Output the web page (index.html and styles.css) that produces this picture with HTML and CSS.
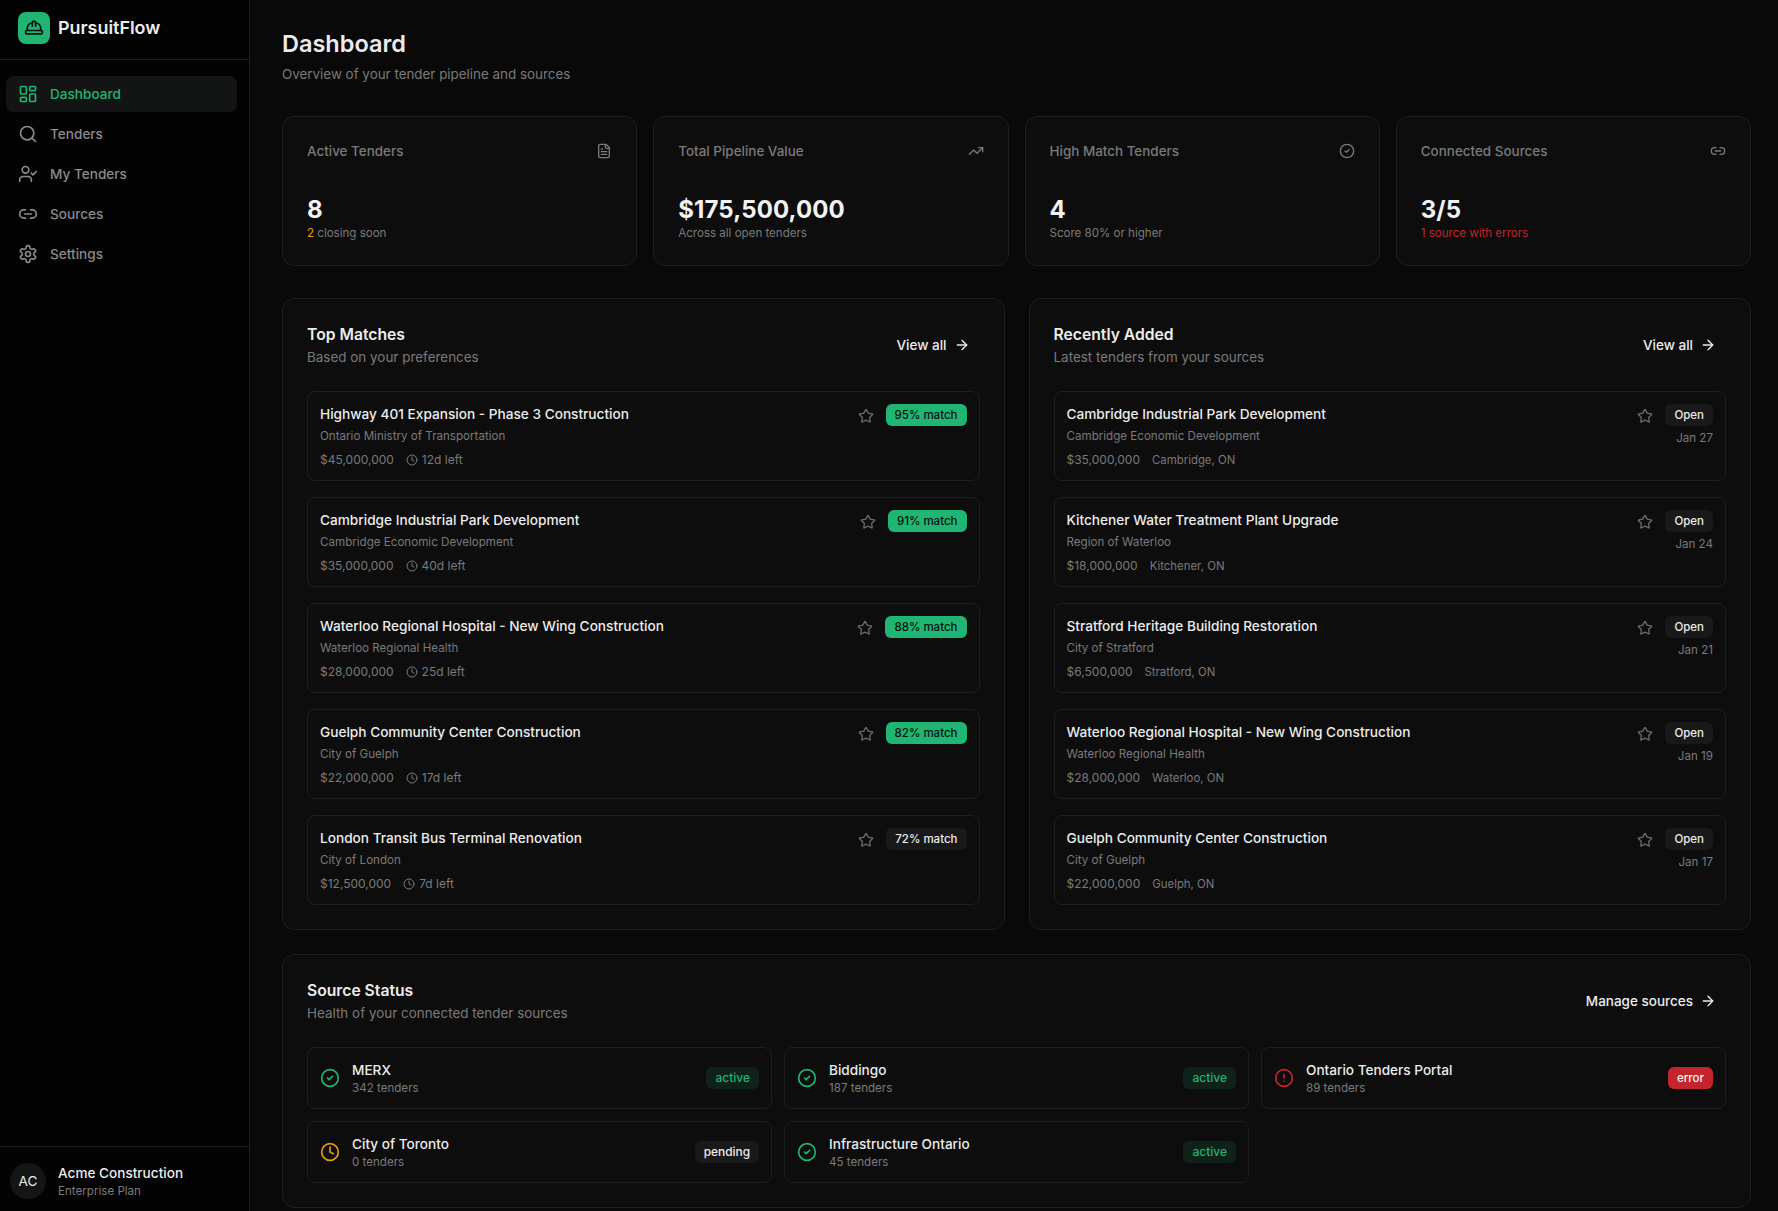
FILE: index.html
```html
<!DOCTYPE html>
<html lang="en">
<head>
<meta charset="utf-8">
<title>PursuitFlow</title>
<link rel="stylesheet" href="styles.css">
</head>
<body>
<svg class="sprite" aria-hidden="true">
  <symbol id="i-hat" viewBox="0 0 24 24"><path d="M10 10V5a1 1 0 0 1 1-1h2a1 1 0 0 1 1 1v5"/><path d="M14 6a6 6 0 0 1 6 6v3"/><path d="M4 15v-3a6 6 0 0 1 6-6"/><rect x="2" y="15" width="20" height="4" rx="1"/></symbol>
  <symbol id="i-dash" viewBox="0 0 24 24"><rect x="3" y="3" width="7" height="9" rx="1"/><rect x="14" y="3" width="7" height="5" rx="1"/><rect x="14" y="12" width="7" height="9" rx="1"/><rect x="3" y="16" width="7" height="5" rx="1"/></symbol>
  <symbol id="i-search" viewBox="0 0 24 24"><path d="m21 21-4.34-4.34"/><circle cx="11" cy="11" r="8"/></symbol>
  <symbol id="i-user" viewBox="0 0 24 24"><path d="m16 11 2 2 4-4"/><path d="M16 21v-2a4 4 0 0 0-4-4H6a4 4 0 0 0-4 4v2"/><circle cx="9" cy="7" r="4"/></symbol>
  <symbol id="i-link" viewBox="0 0 24 24"><path d="M9 17H7A5 5 0 0 1 7 7h2"/><path d="M15 7h2a5 5 0 1 1 0 10h-2"/><line x1="8" x2="16" y1="12" y2="12"/></symbol>
  <symbol id="i-gear" viewBox="0 0 24 24"><path d="M12.22 2h-.44a2 2 0 0 0-2 2v.18a2 2 0 0 1-1 1.73l-.43.25a2 2 0 0 1-2 0l-.15-.08a2 2 0 0 0-2.73.73l-.22.38a2 2 0 0 0 .73 2.73l.15.1a2 2 0 0 1 1 1.72v.51a2 2 0 0 1-1 1.74l-.15.09a2 2 0 0 0-.73 2.73l.22.38a2 2 0 0 0 2.73.73l.15-.08a2 2 0 0 1 2 0l.43.25a2 2 0 0 1 1 1.73V20a2 2 0 0 0 2 2h.44a2 2 0 0 0 2-2v-.18a2 2 0 0 1 1-1.73l.43-.25a2 2 0 0 1 2 0l.15.08a2 2 0 0 0 2.73-.73l.22-.39a2 2 0 0 0-.73-2.73l-.15-.08a2 2 0 0 1-1-1.74v-.5a2 2 0 0 1 1-1.74l.15-.09a2 2 0 0 0 .73-2.73l-.22-.38a2 2 0 0 0-2.73-.73l-.15.08a2 2 0 0 1-2 0l-.43-.25a2 2 0 0 1-1-1.73V4a2 2 0 0 0-2-2z"/><circle cx="12" cy="12" r="3"/></symbol>
  <symbol id="i-file" viewBox="0 0 24 24"><path d="M15 2H6a2 2 0 0 0-2 2v16a2 2 0 0 0 2 2h12a2 2 0 0 0 2-2V7Z"/><path d="M14 2v4a2 2 0 0 0 2 2h4"/><path d="M10 9H8"/><path d="M16 13H8"/><path d="M16 17H8"/></symbol>
  <symbol id="i-trend" viewBox="0 0 24 24"><polyline points="22 7 13.5 15.5 8.5 10.5 2 17"/><polyline points="16 7 22 7 22 13"/></symbol>
  <symbol id="i-check" viewBox="0 0 24 24"><circle cx="12" cy="12" r="10"/><path d="m9 12 2 2 4-4"/></symbol>
  <symbol id="i-star" viewBox="0 0 24 24"><path d="M11.525 2.295a.53.53 0 0 1 .95 0l2.31 4.679a2.123 2.123 0 0 0 1.595 1.16l5.166.756a.53.53 0 0 1 .294.904l-3.736 3.638a2.123 2.123 0 0 0-.611 1.878l.882 5.14a.53.53 0 0 1-.771.56l-4.618-2.428a2.122 2.122 0 0 0-1.973 0L6.396 21.01a.53.53 0 0 1-.77-.56l.881-5.139a2.122 2.122 0 0 0-.611-1.879L2.16 9.795a.53.53 0 0 1 .294-.906l5.165-.755a2.122 2.122 0 0 0 1.597-1.16z"/></symbol>
  <symbol id="i-clock" viewBox="0 0 24 24"><circle cx="12" cy="12" r="10"/><polyline points="12 6 12 12 16 14"/></symbol>
  <symbol id="i-alert" viewBox="0 0 24 24"><circle cx="12" cy="12" r="10"/><line x1="12" x2="12" y1="8" y2="12"/><line x1="12" x2="12.01" y1="16" y2="16"/></symbol>
  <symbol id="i-arrow" viewBox="0 0 24 24"><path d="M5 12h14"/><path d="m12 5 7 7-7 7"/></symbol>
</svg>

<div class="app">
  <aside class="sidebar">
    <div class="brand">
      <span class="brand-mark"><svg class="icon icon-20"><use href="#i-hat"/></svg></span>
      <span class="brand-name">PursuitFlow</span>
    </div>
    <nav class="nav">
      <a class="nav-item active"><svg class="icon icon-20"><use href="#i-dash"/></svg>Dashboard</a>
      <a class="nav-item"><svg class="icon icon-20"><use href="#i-search"/></svg>Tenders</a>
      <a class="nav-item"><svg class="icon icon-20"><use href="#i-user"/></svg>My Tenders</a>
      <a class="nav-item"><svg class="icon icon-20"><use href="#i-link"/></svg>Sources</a>
      <a class="nav-item"><svg class="icon icon-20"><use href="#i-gear"/></svg>Settings</a>
    </nav>
    <div class="account">
      <span class="avatar">AC</span>
      <div>
        <div class="account-name">Acme Construction</div>
        <div class="account-plan">Enterprise Plan</div>
      </div>
    </div>
  </aside>

  <main class="main">
    <header class="page-head">
      <h1>Dashboard</h1>
      <p>Overview of your tender pipeline and sources</p>
    </header>

    <section class="stats">
      <div class="card stat">
        <div class="stat-head"><span>Active Tenders</span><svg class="icon icon-16"><use href="#i-file"/></svg></div>
        <div class="stat-value">8</div>
        <div class="stat-note"><span class="amber">2</span> closing soon</div>
      </div>
      <div class="card stat">
        <div class="stat-head"><span>Total Pipeline Value</span><svg class="icon icon-16"><use href="#i-trend"/></svg></div>
        <div class="stat-value">$175,500,000</div>
        <div class="stat-note">Across all open tenders</div>
      </div>
      <div class="card stat">
        <div class="stat-head"><span>High Match Tenders</span><svg class="icon icon-16"><use href="#i-check"/></svg></div>
        <div class="stat-value">4</div>
        <div class="stat-note">Score 80% or higher</div>
      </div>
      <div class="card stat">
        <div class="stat-head"><span>Connected Sources</span><svg class="icon icon-16"><use href="#i-link"/></svg></div>
        <div class="stat-value">3/5</div>
        <div class="stat-note red">1 source with errors</div>
      </div>
    </section>

    <section class="columns">
      <div class="card panel">
        <div class="panel-head">
          <div><h2>Top Matches</h2><p>Based on your preferences</p></div>
          <a class="link">View all<svg class="icon icon-16"><use href="#i-arrow"/></svg></a>
        </div>
        <div class="list">
          <article class="row">
            <div class="row-main"><h3>Highway 401 Expansion - Phase 3 Construction</h3><div class="org">Ontario Ministry of Transportation</div><div class="meta"><span class="price">$45,000,000</span><span class="left"><svg class="icon icon-12"><use href="#i-clock"/></svg>12d left</span></div></div>
            <div class="row-side"><div class="row-top"><svg class="icon icon-16 star"><use href="#i-star"/></svg><span class="badge green">95% match</span></div></div>
          </article>
          <article class="row">
            <div class="row-main"><h3>Cambridge Industrial Park Development</h3><div class="org">Cambridge Economic Development</div><div class="meta"><span class="price">$35,000,000</span><span class="left"><svg class="icon icon-12"><use href="#i-clock"/></svg>40d left</span></div></div>
            <div class="row-side"><div class="row-top"><svg class="icon icon-16 star"><use href="#i-star"/></svg><span class="badge green">91% match</span></div></div>
          </article>
          <article class="row">
            <div class="row-main"><h3>Waterloo Regional Hospital - New Wing Construction</h3><div class="org">Waterloo Regional Health</div><div class="meta"><span class="price">$28,000,000</span><span class="left"><svg class="icon icon-12"><use href="#i-clock"/></svg>25d left</span></div></div>
            <div class="row-side"><div class="row-top"><svg class="icon icon-16 star"><use href="#i-star"/></svg><span class="badge green">88% match</span></div></div>
          </article>
          <article class="row">
            <div class="row-main"><h3>Guelph Community Center Construction</h3><div class="org">City of Guelph</div><div class="meta"><span class="price">$22,000,000</span><span class="left"><svg class="icon icon-12"><use href="#i-clock"/></svg>17d left</span></div></div>
            <div class="row-side"><div class="row-top"><svg class="icon icon-16 star"><use href="#i-star"/></svg><span class="badge green">82% match</span></div></div>
          </article>
          <article class="row">
            <div class="row-main"><h3>London Transit Bus Terminal Renovation</h3><div class="org">City of London</div><div class="meta"><span class="price">$12,500,000</span><span class="left"><svg class="icon icon-12"><use href="#i-clock"/></svg>7d left</span></div></div>
            <div class="row-side"><div class="row-top"><svg class="icon icon-16 star"><use href="#i-star"/></svg><span class="badge grey">72% match</span></div></div>
          </article>
        </div>
      </div>

      <div class="card panel">
        <div class="panel-head">
          <div><h2>Recently Added</h2><p>Latest tenders from your sources</p></div>
          <a class="link">View all<svg class="icon icon-16"><use href="#i-arrow"/></svg></a>
        </div>
        <div class="list">
          <article class="row">
            <div class="row-main"><h3>Cambridge Industrial Park Development</h3><div class="org">Cambridge Economic Development</div><div class="meta"><span class="price">$35,000,000</span><span>Cambridge, ON</span></div></div>
            <div class="row-side"><div class="row-top"><svg class="icon icon-16 star"><use href="#i-star"/></svg><span class="badge grey">Open</span></div><div class="date">Jan 27</div></div>
          </article>
          <article class="row">
            <div class="row-main"><h3>Kitchener Water Treatment Plant Upgrade</h3><div class="org">Region of Waterloo</div><div class="meta"><span class="price">$18,000,000</span><span>Kitchener, ON</span></div></div>
            <div class="row-side"><div class="row-top"><svg class="icon icon-16 star"><use href="#i-star"/></svg><span class="badge grey">Open</span></div><div class="date">Jan 24</div></div>
          </article>
          <article class="row">
            <div class="row-main"><h3>Stratford Heritage Building Restoration</h3><div class="org">City of Stratford</div><div class="meta"><span class="price">$6,500,000</span><span>Stratford, ON</span></div></div>
            <div class="row-side"><div class="row-top"><svg class="icon icon-16 star"><use href="#i-star"/></svg><span class="badge grey">Open</span></div><div class="date">Jan 21</div></div>
          </article>
          <article class="row">
            <div class="row-main"><h3>Waterloo Regional Hospital - New Wing Construction</h3><div class="org">Waterloo Regional Health</div><div class="meta"><span class="price">$28,000,000</span><span>Waterloo, ON</span></div></div>
            <div class="row-side"><div class="row-top"><svg class="icon icon-16 star"><use href="#i-star"/></svg><span class="badge grey">Open</span></div><div class="date">Jan 19</div></div>
          </article>
          <article class="row">
            <div class="row-main"><h3>Guelph Community Center Construction</h3><div class="org">City of Guelph</div><div class="meta"><span class="price">$22,000,000</span><span>Guelph, ON</span></div></div>
            <div class="row-side"><div class="row-top"><svg class="icon icon-16 star"><use href="#i-star"/></svg><span class="badge grey">Open</span></div><div class="date">Jan 17</div></div>
          </article>
        </div>
      </div>
    </section>

    <section class="card panel">
      <div class="panel-head">
        <div><h2>Source Status</h2><p>Health of your connected tender sources</p></div>
        <a class="link">Manage sources<svg class="icon icon-16"><use href="#i-arrow"/></svg></a>
      </div>
      <div class="sources">
        <div class="source"><svg class="icon icon-20 green-text"><use href="#i-check"/></svg><div class="source-text"><div class="source-name">MERX</div><div class="source-count">342 tenders</div></div><span class="badge soft-green">active</span></div>
        <div class="source"><svg class="icon icon-20 green-text"><use href="#i-check"/></svg><div class="source-text"><div class="source-name">Biddingo</div><div class="source-count">187 tenders</div></div><span class="badge soft-green">active</span></div>
        <div class="source"><svg class="icon icon-20 red"><use href="#i-alert"/></svg><div class="source-text"><div class="source-name">Ontario Tenders Portal</div><div class="source-count">89 tenders</div></div><span class="badge danger">error</span></div>
        <div class="source"><svg class="icon icon-20 amber"><use href="#i-clock"/></svg><div class="source-text"><div class="source-name">City of Toronto</div><div class="source-count">0 tenders</div></div><span class="badge grey">pending</span></div>
        <div class="source"><svg class="icon icon-20 green-text"><use href="#i-check"/></svg><div class="source-text"><div class="source-name">Infrastructure Ontario</div><div class="source-count">45 tenders</div></div><span class="badge soft-green">active</span></div>
      </div>
    </section>
  </main>
</div>
</body>
</html>
```

FILE: styles.css
```css
* { box-sizing: border-box; }
html, body { height: 100%; margin: 0; }
body {
  background: #090909;
  color: #ececec;
  font-family: Inter, "Liberation Sans", sans-serif;
  font-size: 13.6px;
  line-height: 20px;
  overflow: hidden;
}
h1, h2, h3, p { margin: 0; }
.sprite { display: none; }

.icon {
  flex: none;
  fill: none;
  stroke: currentColor;
  stroke-width: 2;
  stroke-linecap: round;
  stroke-linejoin: round;
  display: block;
}
.icon-12 { width: 12px; height: 12px; }
.icon-16 { width: 16px; height: 16px; }
.icon-20 { width: 20px; height: 20px; }

.app { display: flex; height: 100vh; }

.sidebar {
  width: 250px;
  flex: none;
  display: flex;
  flex-direction: column;
  background: #030303;
  border-right: 1px solid #1c1c1c;
}
.brand {
  height: 60px;
  flex: none;
  display: flex;
  align-items: flex-start;
  gap: 8px;
  padding: 12px 0 0 18px;
  border-bottom: 1px solid #1c1c1c;
}
.brand-mark {
  width: 32px;
  height: 32px;
  display: flex;
  align-items: center;
  justify-content: center;
  background: #20b573;
  color: #06130d;
  border-radius: 8px;
}
.brand-name { font-size: 17.9px; font-weight: 600; line-height: 32px; }

.nav {
  flex: 1;
  display: flex;
  flex-direction: column;
  gap: 4px;
  padding: 16px 12px 0 6px;
}
.nav-item {
  height: 36px;
  display: flex;
  align-items: center;
  gap: 12px;
  padding: 0 12px;
  border-radius: 8px;
  color: #8a8a8a;
  font-weight: 450;
}
.nav-item.active { background: #131515; color: #20b573; }

.account {
  height: 65px;
  flex: none;
  display: flex;
  align-items: flex-start;
  gap: 12px;
  padding: 16px 10px 0;
  border-top: 1px solid #1c1c1c;
}
.avatar {
  width: 36px;
  height: 36px;
  display: flex;
  align-items: center;
  justify-content: center;
  flex: none;
  border-radius: 50%;
  background: #141616;
  font-weight: 400;
}
.account-name { font-weight: 450; }
.account-plan { color: #7a7a7a; font-size: 11.6px; line-height: 16px; }

.main { flex: 1; min-width: 0; padding: 28px 27px 0 32px; }

.page-head { margin-bottom: 32px; }
.page-head h1 { font-size: 23.5px; line-height: 32px; font-weight: 600; }
.page-head p { color: #7a7a7a; font-size: 13.4px; margin-top: 4px; }

.card {
  background: #0d0d0d;
  border: 1px solid #1e1e1e;
  border-radius: 12px;
}

.stats {
  display: grid;
  grid-template-columns: repeat(4, 1fr);
  gap: 16px;
  margin-bottom: 32px;
}
.stat { padding: 24px; }
.stat-head {
  display: flex;
  align-items: center;
  justify-content: space-between;
  margin-bottom: 33px;
  color: #7a7a7a;
  font-size: 13.45px;
  font-weight: 450;
}
.stat-value { font-size: 24px; line-height: 31px; font-weight: 700; color: #f2f2f2; letter-spacing: 0.1px; }
.stat-note { color: #7a7a7a; font-size: 11.55px; line-height: 16px; }
.amber { color: #e89b0c; }
.stat-note.red, .red { color: #c4242c; }
.green-text { color: #20b573; }

.columns {
  display: grid;
  grid-template-columns: 1fr 1fr;
  gap: 24px;
  margin-bottom: 24px;
}
.panel { padding: 24px; }
.panel-head {
  display: flex;
  align-items: center;
  justify-content: space-between;
  margin-bottom: 24px;
}
.panel-head h2 { font-size: 15.7px; line-height: 24px; font-weight: 600; }
.panel-head p { color: #7a7a7a; font-size: 13.45px; }
.link {
  display: flex;
  align-items: center;
  gap: 7px;
  padding-right: 10px;
  font-size: 13.5px;
  font-weight: 450;
}

.list { display: flex; flex-direction: column; gap: 16px; }
.row {
  display: flex;
  justify-content: space-between;
  gap: 16px;
  padding: 12px;
  border: 1px solid #1e1e1e;
  border-radius: 8px;
}
.row h3 { font-size: 13.65px; line-height: 20px; font-weight: 450; }
.org { color: #7a7a7a; font-size: 11.6px; line-height: 16px; margin-top: 4px; }
.meta {
  display: flex;
  align-items: center;
  gap: 12px;
  margin-top: 8px;
  color: #7a7a7a;
  font-size: 11.4px;
  line-height: 16px;
}
.price, .left { font-size: 12px; }
.left { display: flex; align-items: center; gap: 4px; }
.row-side { display: flex; flex-direction: column; align-items: flex-end; }
.row-top { display: flex; align-items: flex-start; gap: 12px; }
.star { color: #6a6a6a; margin-top: 4px; }
.date { color: #7a7a7a; font-size: 11.6px; line-height: 16px; margin-top: 4px; }

.badge {
  display: inline-flex;
  align-items: center;
  height: 22px;
  padding: 0 9px;
  border-radius: 6px;
  font-size: 11.5px;
  font-weight: 450;
  white-space: nowrap;
}
.green { background: #20b573; color: #06130d; }
.grey { background: #191919; color: #ececec; }
.soft-green { background: #0f2219; color: #20b573; font-size: 12px; }
.danger { background: #c4242c; color: #f7f7f7; }
.source .grey { font-size: 11.9px; }

.sources {
  display: grid;
  grid-template-columns: repeat(3, 1fr);
  gap: 12px;
}
.source {
  display: flex;
  align-items: center;
  gap: 12px;
  padding: 12px;
  border: 1px solid #1e1e1e;
  border-radius: 8px;
}
.source-text { flex: 1; min-width: 0; }
.source-name { font-weight: 450; }
.source-count { color: #7a7a7a; font-size: 11.6px; line-height: 16px; }
```
